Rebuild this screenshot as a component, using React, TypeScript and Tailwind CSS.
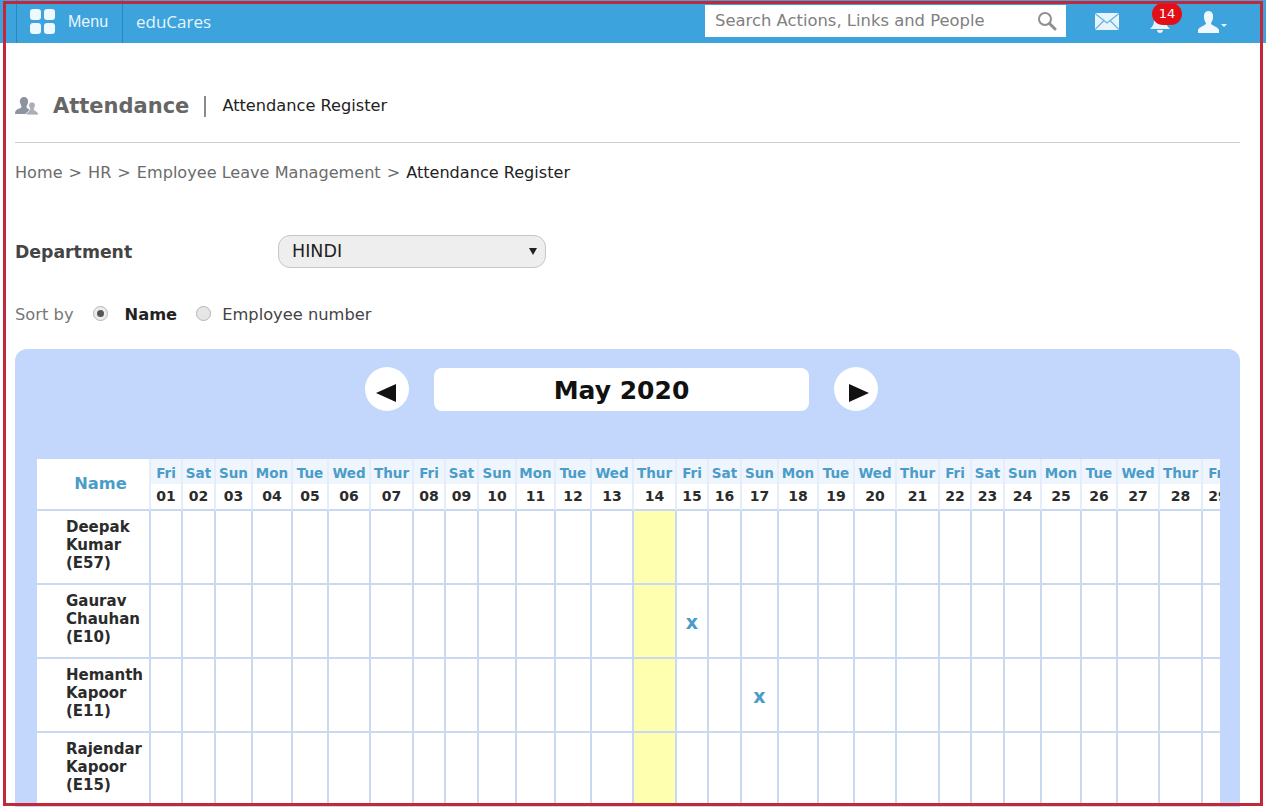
const days = [
  ['Fri', '01', 32], ['Sat', '02', 33], ['Sun', '03', 37], ['Mon', '04', 40], ['Tue', '05', 36], ['Wed', '06', 42], ['Thur', '07', 43],
  ['Fri', '08', 32], ['Sat', '09', 33], ['Sun', '10', 38], ['Mon', '11', 39], ['Tue', '12', 36], ['Wed', '13', 42], ['Thur', '14', 43],
  ['Fri', '15', 32], ['Sat', '16', 33], ['Sun', '17', 37], ['Mon', '18', 40], ['Tue', '19', 36], ['Wed', '20', 42], ['Thur', '21', 43],
  ['Fri', '22', 32], ['Sat', '23', 33], ['Sun', '24', 37], ['Mon', '25', 40], ['Tue', '26', 36], ['Wed', '27', 42], ['Thur', '28', 43],
  ['Fri', '29', 32],
] as const

const employees = [
  { name: ['Deepak', 'Kumar', '(E57)'], absent: '' },
  { name: ['Gaurav', 'Chauhan', '(E10)'], absent: '15' },
  { name: ['Hemanth', 'Kapoor', '(E11)'], absent: '17' },
  { name: ['Rajendar', 'Kapoor', '(E15)'], absent: '' },
]

function MenuIcon() {
  return (
    <div className="grid grid-cols-2 gap-[3px] w-[25px]">
      <span className="h-[11px] rounded-[3px] bg-[#eef8fd]" />
      <span className="h-[11px] rounded-[3px] bg-[#eef8fd]" />
      <span className="h-[11px] rounded-[3px] bg-[#eef8fd]" />
      <span className="h-[11px] rounded-[3px] bg-[#eef8fd]" />
    </div>
  )
}

function SearchIcon() {
  return (
    <svg width="20" height="20" viewBox="0 0 20 20" fill="none">
      <circle cx="8" cy="8" r="6" stroke="#8f8f8f" strokeWidth="2" />
      <path d="M12.5 12.5 L18 18" stroke="#8f8f8f" strokeWidth="3" strokeLinecap="round" />
    </svg>
  )
}

function MailIcon() {
  return (
    <svg width="24" height="17" viewBox="0 0 24 17" fill="none">
      <rect x="0" y="0" width="24" height="17" fill="#e8f4fb" />
      <path d="M0 0.5 L12 10 L24 0.5 M0 16.5 L9 7.5 M24 16.5 L15 7.5" stroke="#5fb3e2" strokeWidth="1.2" />
    </svg>
  )
}

function BellIcon() {
  return (
    <svg width="22" height="21" viewBox="0 0 22 21" fill="#e8f4fb">
      <path d="M11 1 C6 1 5 5 5 9 C5 13 3 15 1 17 L21 17 C19 15 17 13 17 9 C17 5 16 1 11 1 Z" />
      <path d="M8 18 L14 18 C14 20 12.500 21 11 21 C9.500 21 8 20 8 18 Z" />
    </svg>
  )
}

function UserIcon() {
  return (
    <svg width="30" height="22" viewBox="0 0 30 22" fill="#eef8fd">
      <path d="M10.500 0 C14 0 15.500 3 15 7 C14.700 9.500 13.500 11 13 12.500 C13 14.500 20 15.500 21 19 L21 22 L0 22 L0 19 C1 15.500 8 14.500 8 12.500 C7.500 11 6.300 9.500 6 7 C5.500 3 7 0 10.500 0 Z" />
      <path d="M23 13 L29 13 L26 16 Z" />
    </svg>
  )
}

function PeopleIcon() {
  return (
    <svg width="24" height="20" viewBox="0 0 24 20">
      <path d="M9 0 C12 0 13.500 2.500 13 5.500 C12.700 7.500 11.500 8.500 11.500 10 C11.500 11.500 14 12 15.500 13 L16 17 L0 17 C0 14 1 13 3 12 C5 11 6.500 11 6.500 10 C6.500 8.500 5.300 7.500 5 5.500 C4.500 2.500 6 0 9 0 Z" fill="#8d94a0" />
      <path d="M17 5 C19.500 5 20.500 7 20.200 9 C20 10.500 19 11.500 19 12.500 C19 13.500 23.500 14 23.500 18 L11 18 C11 15 15 14 15 12.500 C15 11.500 14 10.500 13.800 9 C13.500 7 14.500 5 17 5 Z" fill="#a9aeb8" stroke="#fff" strokeWidth="0.8" />
    </svg>
  )
}

export default function App() {
  return (
    <div className="relative h-[807px] overflow-hidden bg-white font-['DejaVu_Sans',sans-serif]">
      <header className="h-[43px] bg-[#3ca3dc] flex items-center pl-4 pr-[38px]">
        <div className="h-full w-[107px] flex items-center gap-[13px] pl-[13px] border-l border-r border-[#2a86bd] shrink-0">
          <MenuIcon />
          <span className="font-['Liberation_Sans',sans-serif] text-[16px] text-[#eaf6fd]">Menu</span>
        </div>
        <span className="ml-[13px] text-[17px] text-[#e6f5fd] font-['Open_Sans',sans-serif]">eduCares</span>
        <div className="ml-auto w-[361px] h-[32px] mb-[1px] bg-white flex items-center justify-between pl-[10px] pr-[9px] text-[16.4px] text-[#808080]">
          <span>Search Actions, Links and People</span>
          <SearchIcon />
        </div>
        <div className="ml-[29px] shrink-0"><MailIcon /></div>
        <div className="relative ml-[30px] shrink-0 mt-[1px]">
          <BellIcon />
          <span className="absolute -top-[9px] left-[3px] w-[30px] h-[22px] rounded-full bg-[#e30f17] text-white text-center text-[13px] leading-[22px] font-['DejaVu_Sans',sans-serif]">14</span>
        </div>
        <div className="ml-[27px] shrink-0"><UserIcon /></div>
      </header>

      <main className="pl-[15px] pr-[26px]">
        <div className="h-[100px] border-b border-[#cfcfcf] flex items-center pt-[28px]">
          <div className="mr-[14px]"><PeopleIcon /></div>
          <h1 className="text-[21px] font-bold text-[#666666] leading-none">Attendance</h1>
          <span className="ml-[15px] mr-[16px] w-[2px] h-[21px] bg-[#8a8a8a]" />
          <span className="text-[16.2px] text-[#222222]">Attendance Register</span>
        </div>

        <nav className="mt-[20px] h-[20px] flex items-center gap-[6px] text-[16.1px] text-[#6b6b6b]">
          <span>Home</span><span>&gt;</span><span>HR</span><span>&gt;</span><span>Employee Leave Management</span><span>&gt;</span>
          <span className="text-[#222222]">Attendance Register</span>
        </nav>

        <div className="mt-[52px] flex items-center h-[34px]">
          <label className="w-[263px] text-[17.3px] font-bold text-[#444444] pt-[1px]">Department</label>
          <div className="w-[268px] h-[33px] mb-[2px] rounded-[12px] border border-[#c6c6c6] bg-[#eeeeee] flex items-center justify-between pl-[13px] pr-[8px] text-[17.5px] text-[#222222]">
            <span>HINDI</span>
            <svg width="8" height="7" viewBox="0 0 8 7"><path d="M0 0 L8 0 L4 7 Z" fill="#222" /></svg>
          </div>
        </div>

        <div className="mt-[36px] h-[20px] flex items-center text-[16.3px]">
          <span className="text-[#777777]">Sort by</span>
          <span className="ml-[19px] w-[15px] h-[15px] rounded-full border border-[#b5b5b5] bg-[#ececec] flex items-center justify-center mb-[3px]">
            <span className="w-[7px] h-[7px] rounded-full bg-[#555555]" />
          </span>
          <span className="ml-[17px] font-bold text-[#222222]">Name</span>
          <span className="ml-[19px] w-[15px] h-[15px] rounded-full border border-[#b5b5b5] bg-[#e6e6e6] mb-[3px]" />
          <span className="ml-[11px] text-[#444444]">Employee number</span>
        </div>

        <section className="mt-[24px] h-[600px] rounded-t-[12px] bg-[#c2d7fb] pt-[18px] pl-[22px] pr-[20px]">
          <div className="flex items-center justify-center pr-[14px]">
            <button className="w-[44px] h-[44px] rounded-full bg-white flex items-center justify-center">
              <svg className="mt-[7px] -ml-[2px]" width="20" height="18" viewBox="0 0 20 18"><path d="M0 9 L20 0 L20 18 Z" fill="#111" /></svg>
            </button>
            <div className="mx-[25px] w-[375px] h-[43px] rounded-[8px] bg-white text-center text-[25px] leading-[46px] font-bold text-[#111111]">May 2020</div>
            <button className="w-[44px] h-[44px] rounded-full bg-white flex items-center justify-center">
              <svg className="mt-[7px] ml-[5px]" width="20" height="18" viewBox="0 0 20 18"><path d="M20 9 L0 0 L0 18 Z" fill="#111" /></svg>
            </button>
          </div>

          <div className="mt-[48px] w-[1183px] overflow-hidden">
            <div className="grid w-max grid-cols-[114px_32px_33px_37px_40px_36px_42px_43px_32px_33px_38px_39px_36px_42px_43px_32px_33px_37px_40px_36px_42px_43px_32px_33px_37px_40px_36px_42px_43px_32px] auto-rows-[74px] [grid-template-rows:52px]">
              <div className="border-r-2 border-b-2 border-r-[#e3edfb] border-b-[#c9d9f0] bg-white flex items-center justify-center pl-[15px] text-[16.3px] font-bold text-[#4a9cc9]">Name</div>
              {days.map(([day, date]) => (
                <div key={date} className="border-r-2 border-b-2 border-r-[#e3edfb] border-b-[#c9d9f0] bg-white text-center font-bold">
                  <div className="h-[25px] bg-[#eff5fd] text-[#4a9cc9] text-[13.5px] leading-[28px] whitespace-nowrap">{day}</div>
                  <div className="text-[14px] leading-[25px] text-[#2b2b2b]">{date}</div>
                </div>
              ))}
              {employees.map((emp) => (
                <div key={emp.name[0]} className="contents">
                  <div className="border-r-2 border-b-2 border-[#c9d9f0] bg-white pl-[29px] pb-[4px] flex flex-col justify-center text-[15px] leading-[18px] font-bold text-[#2b2b2b]">
                    {emp.name.map((line) => <span key={line} className="whitespace-nowrap">{line}</span>)}
                  </div>
                  {days.map(([, date]) => (
                    <div key={date} className={date === '14' ? 'border-r-2 border-b-2 border-[#c9d9f0] bg-[#ffffb0]' : 'border-r-2 border-b-2 border-[#c9d9f0] bg-white flex items-center justify-center pt-[3px] text-[19px] font-bold text-[#4a9cc9]'}>
                      {emp.absent === date ? 'x' : ''}
                    </div>
                  ))}
                </div>
              ))}
            </div>
          </div>
        </section>
      </main>

      <div className="absolute left-[3px] top-[1px] right-[3px] bottom-[1px] border-[3px] border-[#c3273a] pointer-events-none" />
    </div>
  )
}
